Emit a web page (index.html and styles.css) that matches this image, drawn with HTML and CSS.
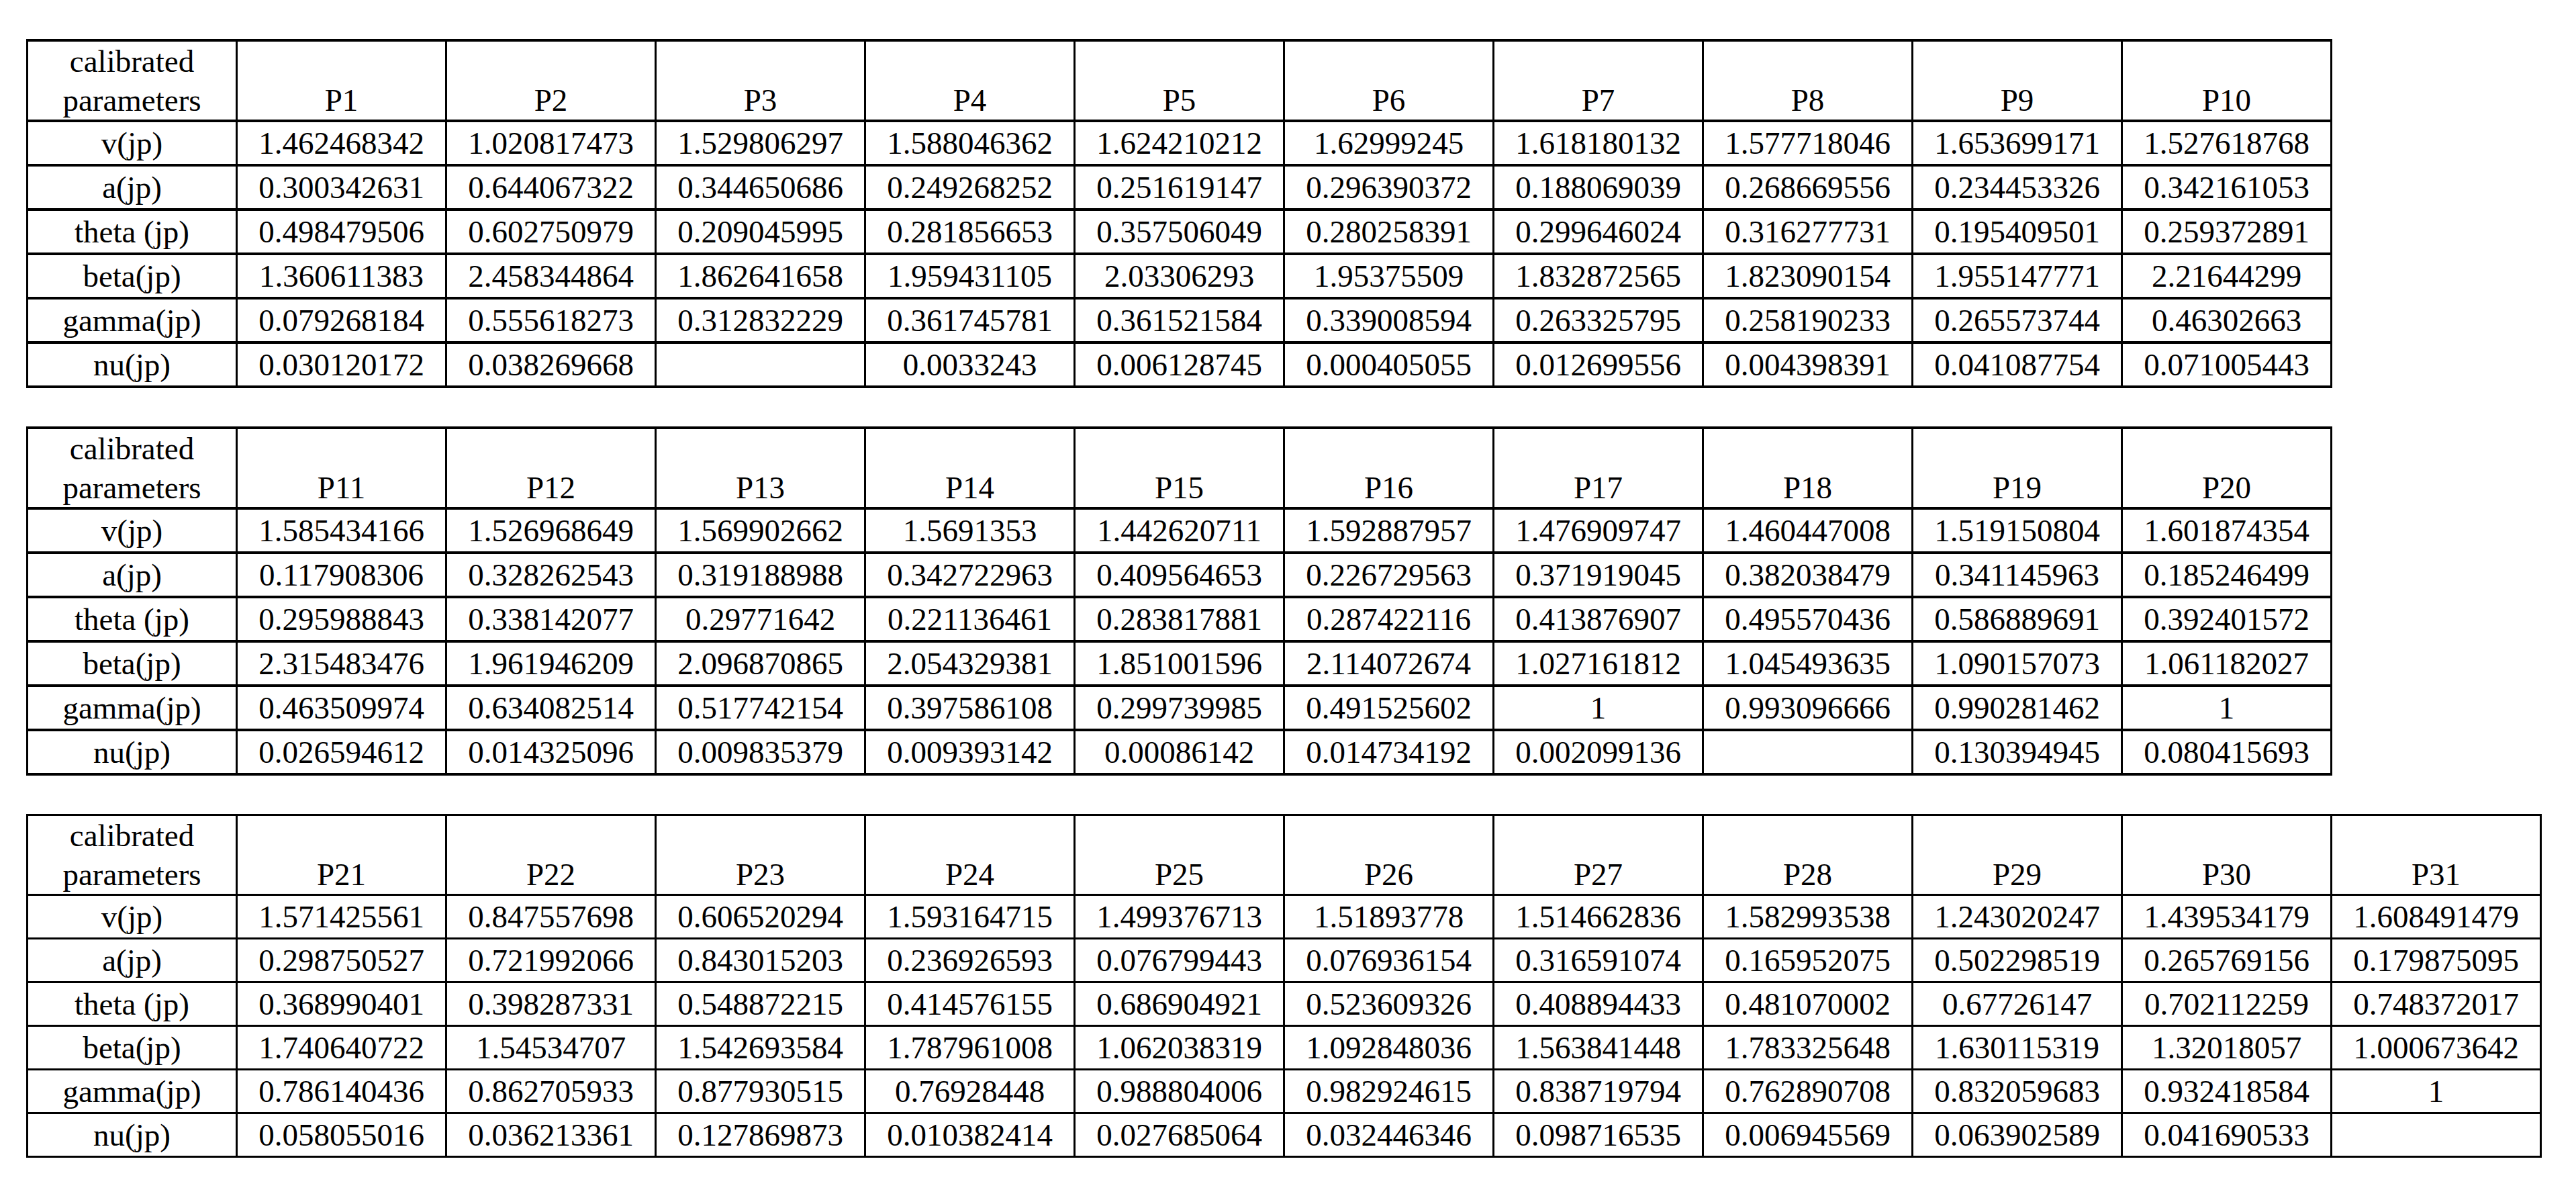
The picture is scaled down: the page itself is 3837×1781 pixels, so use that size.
FILE: index.html
```html
<!DOCTYPE html>
<html>
<head>
<meta charset="utf-8">
<link rel="stylesheet" href="styles.css">
</head>
<body>
<div class="page">
<table class="grid heavy cols11">
<tr class="head"><th class="lbl">calibrated<br>parameters</th><th>P1</th><th>P2</th><th>P3</th><th>P4</th><th>P5</th><th>P6</th><th>P7</th><th>P8</th><th>P9</th><th>P10</th></tr>
<tr><td>v(jp)</td><td>1.462468342</td><td>1.020817473</td><td>1.529806297</td><td>1.588046362</td><td>1.624210212</td><td>1.62999245</td><td>1.618180132</td><td>1.577718046</td><td>1.653699171</td><td>1.527618768</td></tr>
<tr><td>a(jp)</td><td>0.300342631</td><td>0.644067322</td><td>0.344650686</td><td>0.249268252</td><td>0.251619147</td><td>0.296390372</td><td>0.188069039</td><td>0.268669556</td><td>0.234453326</td><td>0.342161053</td></tr>
<tr><td>theta (jp)</td><td>0.498479506</td><td>0.602750979</td><td>0.209045995</td><td>0.281856653</td><td>0.357506049</td><td>0.280258391</td><td>0.299646024</td><td>0.316277731</td><td>0.195409501</td><td>0.259372891</td></tr>
<tr><td>beta(jp)</td><td>1.360611383</td><td>2.458344864</td><td>1.862641658</td><td>1.959431105</td><td>2.03306293</td><td>1.95375509</td><td>1.832872565</td><td>1.823090154</td><td>1.955147771</td><td>2.21644299</td></tr>
<tr><td>gamma(jp)</td><td>0.079268184</td><td>0.555618273</td><td>0.312832229</td><td>0.361745781</td><td>0.361521584</td><td>0.339008594</td><td>0.263325795</td><td>0.258190233</td><td>0.265573744</td><td>0.46302663</td></tr>
<tr><td>nu(jp)</td><td>0.030120172</td><td>0.038269668</td><td></td><td>0.0033243</td><td>0.006128745</td><td>0.000405055</td><td>0.012699556</td><td>0.004398391</td><td>0.041087754</td><td>0.071005443</td></tr>
</table>

<table class="grid heavy cols11">
<tr class="head"><th class="lbl">calibrated<br>parameters</th><th>P11</th><th>P12</th><th>P13</th><th>P14</th><th>P15</th><th>P16</th><th>P17</th><th>P18</th><th>P19</th><th>P20</th></tr>
<tr><td>v(jp)</td><td>1.585434166</td><td>1.526968649</td><td>1.569902662</td><td>1.5691353</td><td>1.442620711</td><td>1.592887957</td><td>1.476909747</td><td>1.460447008</td><td>1.519150804</td><td>1.601874354</td></tr>
<tr><td>a(jp)</td><td>0.117908306</td><td>0.328262543</td><td>0.319188988</td><td>0.342722963</td><td>0.409564653</td><td>0.226729563</td><td>0.371919045</td><td>0.382038479</td><td>0.341145963</td><td>0.185246499</td></tr>
<tr><td>theta (jp)</td><td>0.295988843</td><td>0.338142077</td><td>0.29771642</td><td>0.221136461</td><td>0.283817881</td><td>0.287422116</td><td>0.413876907</td><td>0.495570436</td><td>0.586889691</td><td>0.392401572</td></tr>
<tr><td>beta(jp)</td><td>2.315483476</td><td>1.961946209</td><td>2.096870865</td><td>2.054329381</td><td>1.851001596</td><td>2.114072674</td><td>1.027161812</td><td>1.045493635</td><td>1.090157073</td><td>1.061182027</td></tr>
<tr><td>gamma(jp)</td><td>0.463509974</td><td>0.634082514</td><td>0.517742154</td><td>0.397586108</td><td>0.299739985</td><td>0.491525602</td><td>1</td><td>0.993096666</td><td>0.990281462</td><td>1</td></tr>
<tr><td>nu(jp)</td><td>0.026594612</td><td>0.014325096</td><td>0.009835379</td><td>0.009393142</td><td>0.00086142</td><td>0.014734192</td><td>0.002099136</td><td></td><td>0.130394945</td><td>0.080415693</td></tr>
</table>

<table class="grid light cols12">
<tr class="head"><th class="lbl">calibrated<br>parameters</th><th>P21</th><th>P22</th><th>P23</th><th>P24</th><th>P25</th><th>P26</th><th>P27</th><th>P28</th><th>P29</th><th>P30</th><th>P31</th></tr>
<tr><td>v(jp)</td><td>1.571425561</td><td>0.847557698</td><td>0.606520294</td><td>1.593164715</td><td>1.499376713</td><td>1.51893778</td><td>1.514662836</td><td>1.582993538</td><td>1.243020247</td><td>1.439534179</td><td>1.608491479</td></tr>
<tr><td>a(jp)</td><td>0.298750527</td><td>0.721992066</td><td>0.843015203</td><td>0.236926593</td><td>0.076799443</td><td>0.076936154</td><td>0.316591074</td><td>0.165952075</td><td>0.502298519</td><td>0.265769156</td><td>0.179875095</td></tr>
<tr><td>theta (jp)</td><td>0.368990401</td><td>0.398287331</td><td>0.548872215</td><td>0.414576155</td><td>0.686904921</td><td>0.523609326</td><td>0.408894433</td><td>0.481070002</td><td>0.67726147</td><td>0.702112259</td><td>0.748372017</td></tr>
<tr><td>beta(jp)</td><td>1.740640722</td><td>1.54534707</td><td>1.542693584</td><td>1.787961008</td><td>1.062038319</td><td>1.092848036</td><td>1.563841448</td><td>1.783325648</td><td>1.630115319</td><td>1.32018057</td><td>1.000673642</td></tr>
<tr><td>gamma(jp)</td><td>0.786140436</td><td>0.862705933</td><td>0.877930515</td><td>0.76928448</td><td>0.988804006</td><td>0.982924615</td><td>0.838719794</td><td>0.762890708</td><td>0.832059683</td><td>0.932418584</td><td>1</td></tr>
<tr><td>nu(jp)</td><td>0.058055016</td><td>0.036213361</td><td>0.127869873</td><td>0.010382414</td><td>0.027685064</td><td>0.032446346</td><td>0.098716535</td><td>0.006945569</td><td>0.063902589</td><td>0.041690533</td><td></td></tr>
</table>
</div>
</body>
</html>
```

FILE: styles.css
```css
html, body {
  margin: 0;
  padding: 0;
  background: #ffffff;
}

.page {
  display: flex;
  flex-direction: column;
  align-items: flex-start;
  gap: 57px;
  padding: 58px 0 0 39px;
  font-family: "Liberation Serif", "Times New Roman", serif;
  color: #000000;
}

.grid {
  border-collapse: collapse;
  table-layout: fixed;
  font-size: 47px;
}

.cols11 { width: 3435px; }
.cols12 { width: 3747px; }

.grid th,
.grid td {
  padding: 0;
  text-align: center;
  font-weight: normal;
  white-space: nowrap;
}

.grid td {
  height: 62px;
  vertical-align: middle;
  line-height: 54px;
}

.grid th {
  height: 116px;
  vertical-align: bottom;
  line-height: 58px;
}

.heavy th,
.heavy td {
  border: 4px solid #000000;
  border-left-width: 3px;
  border-right-width: 3px;
}

.light th,
.light td {
  border: 3px solid #000000;
}
```
